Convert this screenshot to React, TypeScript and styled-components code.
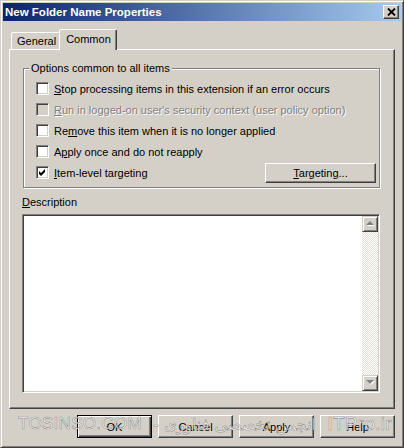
import React from 'react';
import styled, { createGlobalStyle, css } from 'styled-components';

const GlobalStyle = createGlobalStyle`
  html, body { margin: 0; padding: 0; background: #d4d0c8; }
  body { font-family: "Liberation Sans", Arial, sans-serif; font-size: 11px; color: #000; }
  * { box-sizing: border-box; }
`;

const raised = css`
  border: 1px solid;
  border-color: #fff #404040 #404040 #fff;
  box-shadow: inset -1px -1px 0 #808080;
`;

const Window = styled.div`
  position: relative;
  width: 404px;
  height: 448px;
  background: #d4d0c8;
  border: 1px solid;
  border-color: #d4d0c8 #404040 #404040 #d4d0c8;
  box-shadow: inset 1px 1px 0 #fff, inset -1px -1px 0 #808080;
  padding: 2px;
  display: flex;
  flex-direction: column;
  overflow: hidden;
`;

const TitleBar = styled.div`
  height: 18px;
  display: flex;
  align-items: center;
  justify-content: space-between;
  padding: 0 2px 0 2px;
  background: linear-gradient(to right, #0a246a, #a6caf0);
`;

const Title = styled.span`
  color: #fff;
  font-weight: bold;
  font-size: 11.5px;
`;

const CloseButton = styled.div`
  width: 16px;
  height: 14px;
  background: #d4d0c8;
  border: 1px solid;
  border-color: #fff #404040 #404040 #fff;
  box-shadow: inset -1px -1px 0 #808080;
  display: flex;
  align-items: center;
  justify-content: center;
`;

const Body = styled.div`
  flex: 1;
  display: flex;
  flex-direction: column;
  padding: 8px 6px 7px 6px;
`;

const TabStrip = styled.div`
  height: 20px;
  display: flex;
  align-items: flex-end;
  padding-left: 2px;
  position: relative;
  z-index: 1;
`;

const Tab = styled.div<{ $active?: boolean }>`
  height: 17px;
  padding: 0 4px 0 5px;
  display: flex;
  align-items: center;
  background: #d4d0c8;
  border: 1px solid;
  border-bottom: none;
  border-color: #fff #404040 transparent #fff;
  border-radius: 2px 2px 0 0;
  box-shadow: inset -1px 0 0 #808080;
  ${p => p.$active && css`
    height: 21px;
    margin: 0 -2px -1px -2px;
    padding: 0 5px 2px 6px;
    position: relative;
    z-index: 2;
  `}
`;

const Panel = styled.div`
  height: 360px;
  ${raised};
  padding: 12px 14px 15px 13px;
  display: flex;
  flex-direction: column;
`;

const Group = styled.fieldset`
  margin: 0;
  padding: 3px 3px 4px 0;
  border: 1px solid #808080;
  box-shadow: inset 1px 1px 0 #fff, 1px 1px 0 #fff;
  min-inline-size: 0;
`;

const Legend = styled.legend`
  padding: 0 2px;
  margin-left: 5px;
  line-height: 13px;
  background: #d4d0c8;
`;

const Options = styled.div`
  display: flex;
  flex-direction: column;
  padding-left: 12px;
`;

const Row = styled.div`
  height: 21px;
  display: flex;
  align-items: center;
  justify-content: space-between;
`;

const CheckLabel = styled.label<{ $disabled?: boolean }>`
  display: flex;
  align-items: center;
  gap: 5px;
  color: ${p => (p.$disabled ? '#808080' : '#000')};
  text-shadow: ${p => (p.$disabled ? '1px 1px 0 #fff' : 'none')};
`;

const Box = styled.span<{ $disabled?: boolean }>`
  width: 13px;
  height: 13px;
  flex: none;
  display: inline-block;
  background: ${p => (p.$disabled ? '#d4d0c8' : '#fff')};
  border: 1px solid;
  border-color: #808080 #fff #fff #808080;
  box-shadow: inset 1px 1px 0 #404040, inset -1px -1px 0 #d4d0c8;
  position: relative;
`;

const CheckSvg = styled.svg`
  position: absolute;
  left: 0;
  top: 0;
`;

const U = styled.span`
  text-decoration: underline;
`;

const PushButton = styled.div<{ $w?: number; $h?: number; $default?: boolean }>`
  width: ${p => p.$w ?? 75}px;
  height: ${p => p.$h ?? 23}px;
  display: flex;
  align-items: center;
  justify-content: center;
  background: #d4d0c8;
  ${p => p.$default
    ? css`
      border: 1px solid #000;
      box-shadow: inset 1px 1px 0 #fff, inset -1px -1px 0 #404040, inset -2px -2px 0 #808080;
    `
    : raised}
`;

const DescLabel = styled.div`
  margin: 8px 0 5px -1px;
  line-height: 13px;
`;

const Memo = styled.div`
  flex: 1;
  display: flex;
  margin-left: -1px;
  background: #fff;
  border: 1px solid;
  border-color: #808080 #fff #fff #808080;
  box-shadow: inset 1px 1px 0 #404040, inset -1px -1px 0 #d4d0c8;
  padding: 1px;
`;

const MemoText = styled.div`
  flex: 1;
`;

const ScrollBar = styled.div`
  width: 16px;
  display: flex;
  flex-direction: column;
`;

const ScrollArrow = styled.div`
  width: 16px;
  height: 16px;
  background: #d4d0c8;
  border: 1px solid;
  border-color: #d4d0c8 #404040 #404040 #d4d0c8;
  box-shadow: inset 1px 1px 0 #fff, inset -1px -1px 0 #808080;
  display: flex;
  align-items: center;
  justify-content: center;
`;

const Track = styled.div`
  flex: 1;
  background-color: #fff;
  background-image: conic-gradient(#e4e1db 25%, #fff 0 50%, #e4e1db 0 75%, #fff 0);
  background-size: 2px 2px;
`;

const ButtonRow = styled.div`
  margin-top: 6px;
  display: flex;
  justify-content: flex-end;
  gap: 6px;
`;

const Watermark = styled.div`
  position: absolute;
  left: 17px;
  top: 412px;
  width: 374px;
  display: flex;
  align-items: center;
  pointer-events: none;
  color: rgba(255, 255, 255, 0.75);
  -webkit-text-stroke: 0.6px rgba(90, 90, 90, 0.6);
  white-space: nowrap;
`;

const WmLatin = styled.span<{ $size: number }>`
  font-family: "Liberation Sans", Arial, sans-serif;
  font-size: ${p => p.$size}px;
  letter-spacing: 0.3px;
`;

const WmPersian = styled.span`
  font-family: "DejaVu Sans", sans-serif;
  font-size: 16px;
  flex: 1;
  padding: 0 4px;
  text-align: center;
`;

const Check = () => (
  <CheckSvg width="11" height="11" viewBox="0 0 11 11">
    <polygon points="2,4 4,6 8,2 8,5 4,9 2,7" fill="#000" />
  </CheckSvg>
);

const Arrow = ({ up }: { up?: boolean }) => (
  <svg width="9" height="6" viewBox="0 0 9 6">
    {up ? (
      <>
        <polygon points="1,5 5,1 9,5" fill="#fff" />
        <polygon points="0,4 4,0 8,4" fill="#808080" />
      </>
    ) : (
      <>
        <polygon points="1,1 9,1 5,5" fill="#fff" />
        <polygon points="0,0 8,0 4,4" fill="#808080" />
      </>
    )}
  </svg>
);

type Opt = { pre: string; key: string; post: string; disabled?: boolean };

const options: Opt[] = [
  { pre: '', key: 'S', post: 'top processing items in this extension if an error occurs' },
  { pre: '', key: 'R', post: "un in logged-on user's security context (user policy option)", disabled: true },
  { pre: 'Re', key: 'm', post: 'ove this item when it is no longer applied' },
  { pre: 'A', key: 'p', post: 'ply once and do not reapply' },
];

export default function App() {
  return (
    <>
      <GlobalStyle />
      <Window>
        <TitleBar>
          <Title>New Folder Name Properties</Title>
          <CloseButton>
            <svg width="9" height="8" viewBox="0 0 9 8">
              <path d="M1 0.5 L8 7.5 M8 0.5 L1 7.5" stroke="#000" strokeWidth="1.8" fill="none" />
            </svg>
          </CloseButton>
        </TitleBar>
        <Body>
          <TabStrip>
            <Tab>General</Tab>
            <Tab $active>Common</Tab>
          </TabStrip>
          <Panel>
            <Group>
              <Legend>Options common to all items</Legend>
              <Options>
                {options.map((o, i) => (
                  <Row key={i}>
                    <CheckLabel $disabled={o.disabled}>
                      <Box $disabled={o.disabled} />
                      <span>
                        {o.pre}
                        <U>{o.key}</U>
                        {o.post}
                      </span>
                    </CheckLabel>
                  </Row>
                ))}
                <Row>
                  <CheckLabel>
                    <Box>
                      <Check />
                    </Box>
                    <span>
                      <U>I</U>tem-level targeting
                    </span>
                  </CheckLabel>
                  <PushButton $w={111} $h={20}>
                    <span>
                      <U>T</U>argeting...
                    </span>
                  </PushButton>
                </Row>
              </Options>
            </Group>
            <DescLabel>
              <U>D</U>escription
            </DescLabel>
            <Memo>
              <MemoText />
              <ScrollBar>
                <ScrollArrow>
                  <Arrow up />
                </ScrollArrow>
                <Track />
                <ScrollArrow>
                  <Arrow />
                </ScrollArrow>
              </ScrollBar>
            </Memo>
          </Panel>
          <ButtonRow>
            <PushButton $default>OK</PushButton>
            <PushButton>Cancel</PushButton>
            <PushButton>Apply</PushButton>
            <PushButton>Help</PushButton>
          </ButtonRow>
        </Body>
        <Watermark>
          <WmLatin $size={17}>TOSINSO.COM</WmLatin>
          <WmPersian dir="rtl">انجمن تخصصی فناوری -</WmPersian>
          <WmLatin $size={19}>ITPro.ir</WmLatin>
        </Watermark>
      </Window>
    </>
  );
}
